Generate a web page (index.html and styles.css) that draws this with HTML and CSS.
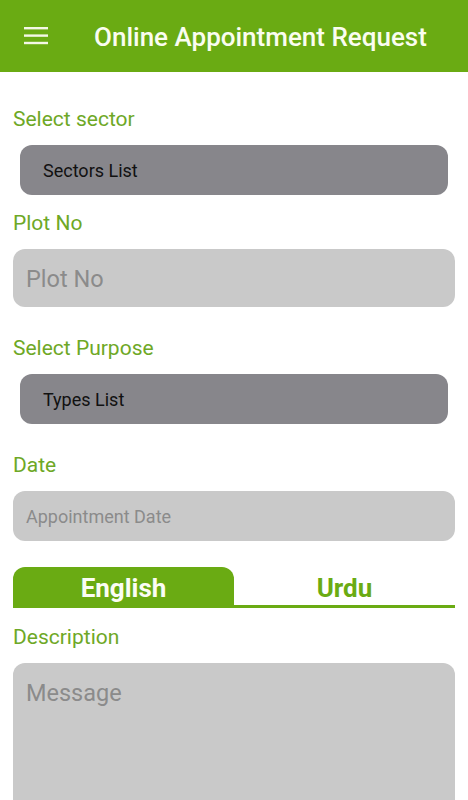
FILE: index.html
```html
<!DOCTYPE html>
<html>
<head>
<meta charset="utf-8">
<link rel="stylesheet" href="styles.css">
</head>
<body>
<header class="appbar">
  <svg class="menu" width="24" height="18" viewBox="0 0 24 18">
    <rect x="0" y="0" width="24" height="2.4" fill="#f4f8e6"/>
    <rect x="0" y="7.4" width="24" height="2.4" fill="#f4f8e6"/>
    <rect x="0" y="14.8" width="24" height="2.4" fill="#f4f8e6"/>
  </svg>
  <h1 class="title">Online Appointment Request</h1>
</header>
<main class="form">
  <div class="label l-first">Select sector</div>
  <div class="select">Sectors List</div>
  <div class="label l-near">Plot No</div>
  <div class="input input-tall">Plot No</div>
  <div class="label l-far">Select Purpose</div>
  <div class="select">Types List</div>
  <div class="label l-far">Date</div>
  <div class="input input-short">Appointment Date</div>
  <div class="tabs">
    <div class="tab tab-active">English</div>
    <div class="tab">Urdu</div>
  </div>
  <div class="label l-desc">Description</div>
  <div class="textarea">Message</div>
</main>
</body>
</html>
```
FILE: styles.css
```css
* { box-sizing: border-box; }
html, body { margin: 0; padding: 0; }
body {
  width: 468px;
  height: 800px;
  overflow: hidden;
  background: #ffffff;
  font-family: Roboto, "Noto Sans", sans-serif;
}
.appbar {
  height: 72px;
  background: #6aab13;
  display: flex;
  align-items: center;
  padding-left: 24px;
}
.menu { display: block; margin-top: -1px; }
.title {
  margin: 2px 0 0 46px;
  font-size: 26px;
  font-weight: 500;
  color: #fafdf0;
  line-height: 30px;
}
.form {
  padding: 0 13px;
  display: flex;
  flex-direction: column;
}
.label {
  font-size: 21px;
  line-height: 24px;
  height: 24px;
  color: #6ea826;
  margin-bottom: 14px;
}
.l-first { margin-top: 35px; }
.l-near { margin-top: 16px; }
.l-far { margin-top: 29px; }
.l-desc { margin-top: 17px; }
.select {
  margin: 0 7px;
  height: 50px;
  border-radius: 12px;
  background: #87868b;
  color: #111111;
  font-size: 18px;
  display: flex;
  align-items: center;
  padding-left: 23px;
  padding-top: 1px;
}
.input {
  border-radius: 12px;
  background: #c9c9c9;
  color: #8b8b8b;
  display: flex;
  align-items: center;
  padding-left: 13px;
  padding-top: 1px;
}
.input-tall { height: 58px; font-size: 23.5px; }
.input-short { height: 50px; font-size: 18px; }
.tabs {
  margin-top: 26px;
  display: flex;
  border-bottom: 3px solid #6aab13;
  height: 41px;
}
.tab {
  flex: 1;
  display: flex;
  align-items: center;
  justify-content: center;
  font-size: 26px;
  font-weight: 700;
  color: #6aab13;
  padding-top: 3px;
}
.tab-active {
  background: #6aab13;
  color: #fbfdf5;
  border-radius: 12px 12px 0 0;
}
.textarea {
  height: 140px;
  border-radius: 12px 12px 0 0;
  background: #c9c9c9;
  color: #8b8b8b;
  font-size: 23.5px;
  padding: 17px 13px;
  line-height: 26px;
}
```
